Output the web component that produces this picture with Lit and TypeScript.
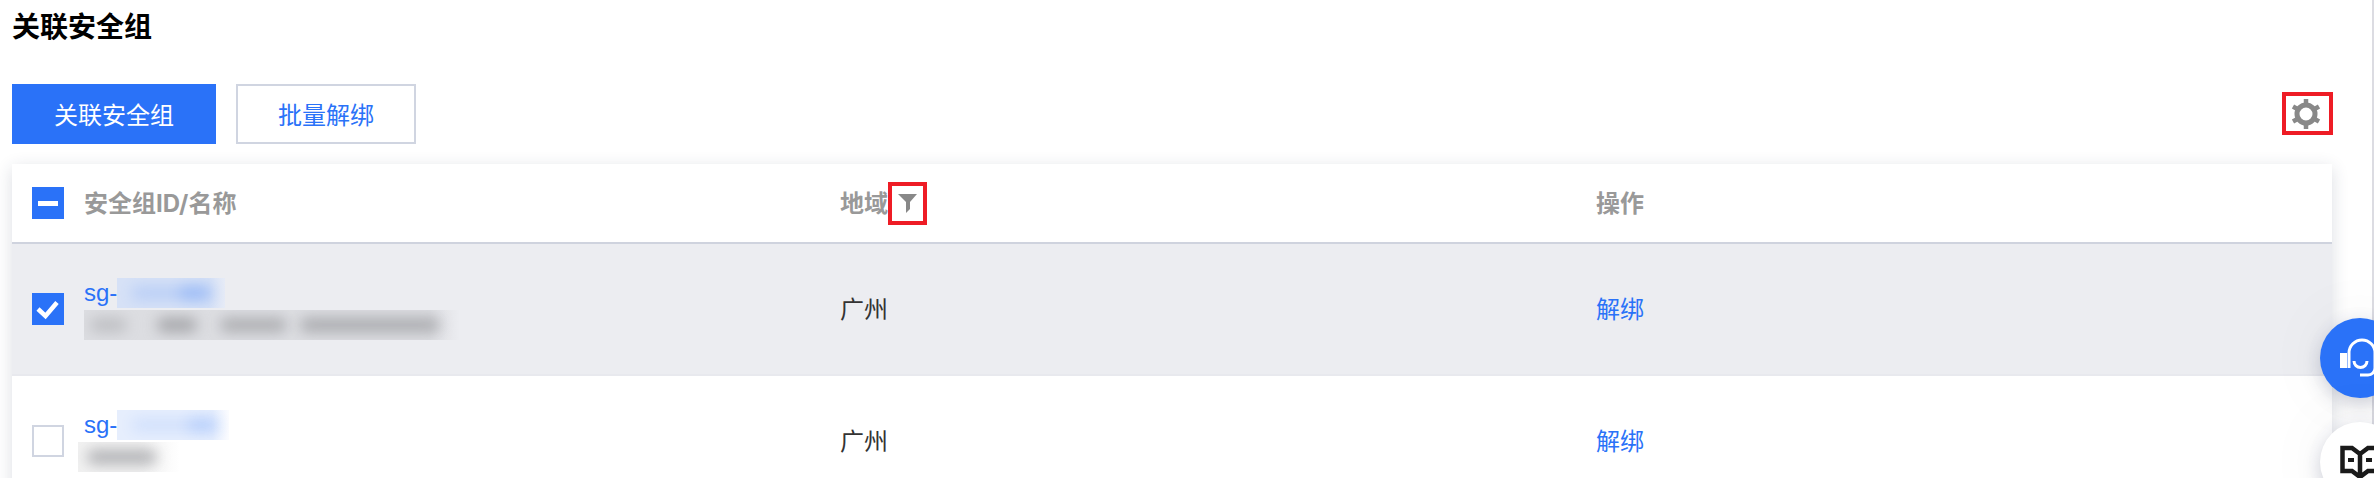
import { LitElement, css, html, svg } from 'lit'
import { customElement } from 'lit/decorators.js'

const checkIcon = svg`<polyline points="6,16 13.5,23 25,9.5" fill="none" stroke="#fff" stroke-width="4.5" />`
const rows = [
  { blue: 108, blueSpots: [[14, 84, 0.16], [62, 30, 0.22]], gray: 376, graySpots: [[6, 37, 0.55], [73, 40, 1], [136, 67, 0.85], [216, 140, 0.9]], offset: 0, checked: true },
  { blue: 112, blueSpots: [[14, 90, 0.1], [70, 30, 0.16]], gray: 102, graySpots: [[9, 70, 0.85]], offset: -6, checked: false },
]

@customElement('app-root')
export class AppRoot extends LitElement {
  static styles = css`
    :host {
      display: block;
      position: relative;
      height: 478px;
      overflow: hidden;
      background: #fff;
      font-family: 'Liberation Sans', 'Noto Sans CJK SC', sans-serif;
      font-size: 24px;
      color: #333;
    }
    .scroll-line {
      position: absolute;
      top: 0;
      right: 0;
      bottom: 0;
      width: 2px;
      background: #dcdce2;
    }
    h1 {
      margin: 0;
      padding-left: 12px;
      height: 56px;
      font-size: 28px;
      line-height: 56px;
      font-weight: 700;
      color: #000;
    }
    .toolbar {
      display: flex;
      align-items: flex-start;
      gap: 20px;
      margin-top: 28px;
      padding: 0 41px 0 12px;
    }
    button {
      box-sizing: border-box;
      height: 60px;
      padding: 0 0 2px;
      font: inherit;
      border: 2px solid #d0d5e1;
      background: #fff;
      color: #2a72f8;
    }
    button.primary {
      width: 204px;
      background: #2a72f8;
      border-color: #2a72f8;
      color: #fff;
    }
    button.ghost {
      width: 180px;
    }
    .mark {
      display: inline-flex;
      align-items: center;
      justify-content: center;
      box-sizing: border-box;
      border: 4px solid #ee1c25;
    }
    .gear {
      width: 51px;
      height: 43px;
      margin: 8px 0 0 auto;
      padding-right: 3px;
    }
    .funnel {
      width: 39px;
      height: 43px;
    }
    .table {
      width: 2320px;
      margin: 20px 0 0 12px;
      box-shadow: 0 4px 16px rgba(40, 50, 80, 0.16);
    }
    .row {
      display: grid;
      grid-template-columns: 72px 756px 756px 1fr;
      align-items: center;
      box-sizing: border-box;
    }
    .head {
      height: 80px;
      color: #999;
      font-weight: 700;
      border-bottom: 2px solid #cfd3de;
      background: #fff;
    }
    .body {
      height: 132px;
      border-bottom: 2px solid #e8e9ee;
    }
    .body.selected {
      background: #ecedf1;
    }
    .label {
      padding-bottom: 3px;
    }
    .latin {
      font-family: Inter, 'Liberation Sans', sans-serif;
    }
    .check {
      box-sizing: border-box;
      display: block;
      width: 32px;
      height: 32px;
      margin-left: 20px;
      border: 2px solid #d0d5e1;
      background: #fff;
    }
    .check.on {
      background: #2a72f8;
      border: 0;
    }
    .check.mixed {
      display: flex;
      align-items: center;
      justify-content: center;
      background: #2a72f8;
      border: 0;
    }
    .check.mixed::after {
      content: '';
      width: 20px;
      height: 5px;
      background: #fff;
    }
    .region {
      display: flex;
      align-items: center;
    }
    a {
      color: #2a72f8;
    }
    .id {
      display: flex;
      align-items: center;
      height: 30px;
      color: #2a72f8;
      line-height: 30px;
    }
    .mask {
      position: relative;
      display: block;
      height: 30px;
      overflow: hidden;
    }
    .mask i {
      position: absolute;
      top: 8px;
      height: 14px;
      border-radius: 7px;
      filter: blur(7px);
    }
    .mask.blue {
      background: linear-gradient(90deg, #d6e1f6 85%, #e6ebf6);
    }
    .mask.blue i {
      background: #2a72f8;
    }
    .row:not(.selected) .mask.blue {
      background: linear-gradient(90deg, #e6eefd 85%, #fbfcff);
    }
    .mask.gray {
      margin-top: 2px;
      background: linear-gradient(90deg, #dcdde1 92%, #ecedf1);
    }
    .mask.gray i {
      background: #a4a5a9;
    }
    .row:not(.selected) .mask.gray {
      background: linear-gradient(90deg, #f1f1f1 60%, #fff);
    }
    .floater {
      position: absolute;
      left: 2320px;
      width: 80px;
      height: 80px;
      border-radius: 50%;
      box-shadow: 0 6px 18px rgba(40, 50, 80, 0.22), 0 0 70px rgba(40, 50, 80, 0.05);
    }
    .floater.help {
      top: 318px;
      background: #2a72f8;
    }
    .floater.docs {
      top: 422px;
      background: #fff;
    }
  `

  renderRow(r: (typeof rows)[number]) {
    return html`
      <div class="row body ${r.checked ? 'selected' : ''}">
        ${r.checked
          ? html`<svg class="check on" viewBox="0 0 32 32">${checkIcon}</svg>`
          : html`<span class="check"></span>`}
        <div>
          <div class="id">
            sg-<span class="mask blue" style="width:${r.blue}px"
              >${r.blueSpots.map(
                ([x, w, o]) => html`<i style="left:${x}px;width:${w}px;opacity:${o}"></i>`
              )}</span
            >
          </div>
          <span class="mask gray" style="width:${r.gray}px;margin-left:${r.offset}px"
            >${r.graySpots.map(
              ([x, w, o]) => html`<i style="left:${x}px;width:${w}px;opacity:${o}"></i>`
            )}</span
          >
        </div>
        <span class="label">广州</span>
        <a class="label">解绑</a>
      </div>
    `
  }

  render() {
    return html`
      <h1>关联安全组</h1>
      <div class="toolbar">
        <button class="primary">关联安全组</button>
        <button class="ghost">批量解绑</button>
        <span class="mark gear">
          <svg width="32" height="32" viewBox="0 0 32 32">
            <circle cx="16" cy="16" r="9" fill="none" stroke="#888" stroke-width="5" />
            <g stroke="#888" stroke-width="4.5">
              <line x1="16" y1="1" x2="16" y2="7" />
              <line x1="16" y1="25" x2="16" y2="31" />
              <line x1="3" y1="8.5" x2="8.2" y2="11.5" />
              <line x1="29" y1="8.5" x2="23.8" y2="11.5" />
              <line x1="3" y1="23.5" x2="8.2" y2="20.5" />
              <line x1="29" y1="23.5" x2="23.8" y2="20.5" />
            </g>
          </svg>
        </span>
      </div>
      <div class="table">
        <div class="row head">
          <span class="check mixed"></span>
          <span class="label">安全组<span class="latin">ID/</span>名称</span>
          <span class="region">
            <span class="label">地域</span>
            <span class="mark funnel">
              <svg width="19" height="19" viewBox="0 0 19 19">
                <path d="M0 0H19L12 8V15L8 19V8Z" fill="#888" />
              </svg>
            </span>
          </span>
          <span class="label">操作</span>
        </div>
        ${rows.map((r) => this.renderRow(r))}
      </div>
      <div class="scroll-line"></div>
      <div class="floater help">
        <svg width="80" height="80" viewBox="0 0 80 80">
          <rect x="20" y="35" width="7" height="15" fill="#fff" />
          <path
            d="M29 50V35A13 13 0 0 1 55 35V50A7 7 0 0 1 48 57H40"
            fill="none"
            stroke="#fff"
            stroke-width="3"
          />
          <path d="M34 43A6.5 6.5 0 0 0 47 43" fill="none" stroke="#fff" stroke-width="3" />
        </svg>
      </div>
      <div class="floater docs">
        <svg width="80" height="80" viewBox="0 0 80 80">
          <path
            d="M22.5 26H32L40 32L48 26H60V49H48L40 55L32 49H22.5Z M40 32V55"
            fill="none"
            stroke="#1a1a1a"
            stroke-width="4.5"
          />
          <rect x="28" y="36" width="6" height="4" fill="#1a1a1a" />
          <rect x="46" y="36" width="6" height="4" fill="#1a1a1a" />
        </svg>
      </div>
    `
  }
}
